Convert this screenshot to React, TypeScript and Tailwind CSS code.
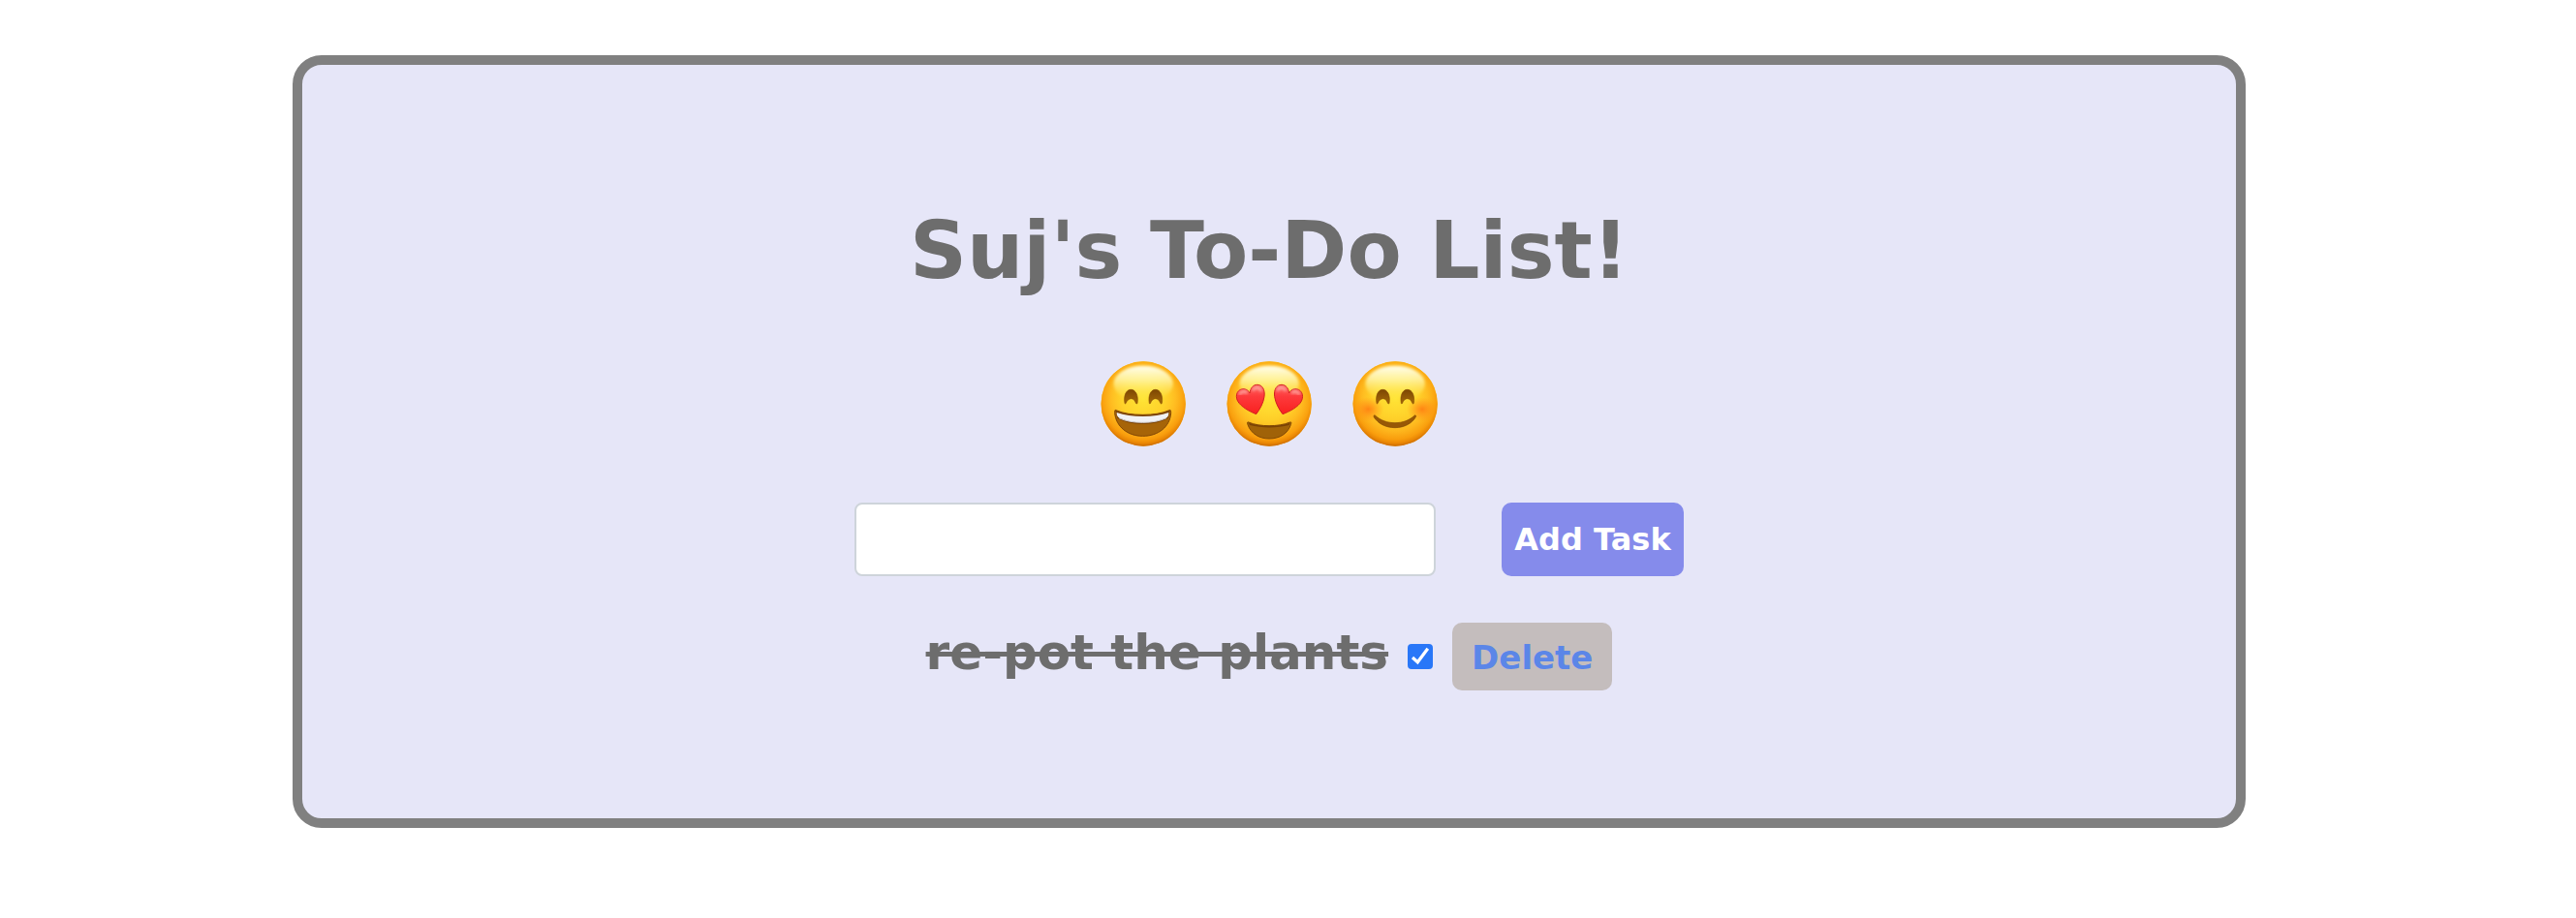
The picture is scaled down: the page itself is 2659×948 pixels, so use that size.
import { useState } from "react";
import type { FormEvent, ReactNode } from "react";

function Face({ id, label, children }: { id: string; label: string; children: ReactNode }) {
  return (
    <svg role="img" aria-label={label} viewBox="48 38 264 264" className="size-22">
      <defs>
        <linearGradient id={`${id}-base`} x1="0" y1="0" x2="0" y2="1">
          <stop offset="0" stopColor="#fcc400" />
          <stop offset="0.3" stopColor="#ffd42a" />
          <stop offset="0.6" stopColor="#ffca26" />
          <stop offset="1" stopColor="#f39a0a" />
        </linearGradient>
        <radialGradient id={`${id}-glow`} cx="0.5" cy="0.44" r="0.56">
          <stop offset="0" stopColor="#ffe637" stopOpacity="0.9" />
          <stop offset="0.45" stopColor="#ffd52c" stopOpacity="0.7" />
          <stop offset="0.68" stopColor="#ffb81f" stopOpacity="0.8" />
          <stop offset="0.86" stopColor="#f99c0c" stopOpacity="0.9" />
          <stop offset="0.94" stopColor="#e98504" stopOpacity="0.95" />
          <stop offset="1" stopColor="#c96a02" />
        </radialGradient>
        <linearGradient id={`${id}-shine`} x1="0" y1="0" x2="0" y2="1">
          <stop offset="0" stopColor="#fffff0" />
          <stop offset="0.4" stopColor="#fff9b0" stopOpacity="0.8" />
          <stop offset="1" stopColor="#ffec40" stopOpacity="0" />
        </linearGradient>
        <linearGradient id={`${id}-brown`} x1="0" y1="0" x2="0" y2="1">
          <stop offset="0" stopColor="#7d4603" />
          <stop offset="1" stopColor="#a66a08" />
        </linearGradient>
        <linearGradient id={`${id}-heart`} x1="0" y1="0" x2="0" y2="1">
          <stop offset="0" stopColor="#ff6460" />
          <stop offset="0.4" stopColor="#fd3a3c" />
          <stop offset="1" stopColor="#f9201f" />
        </linearGradient>
        <radialGradient id={`${id}-blush`}>
          <stop offset="0" stopColor="#ff7a10" stopOpacity="0.85" />
          <stop offset="1" stopColor="#ff8a14" stopOpacity="0" />
        </radialGradient>
        <filter id={`${id}-soft`} x="-20%" y="-20%" width="140%" height="140%">
          <feGaussianBlur stdDeviation="4" />
        </filter>
      </defs>
      <circle cx="180.500" cy="170" r="131" fill={`url(#${id}-base)`} />
      <circle cx="180.500" cy="170" r="131" fill={`url(#${id}-glow)`} />
      <ellipse cx="180.500" cy="108" rx="92" ry="56" fill={`url(#${id}-shine)`} filter={`url(#${id}-soft)`} />
      {children}
    </svg>
  );
}

function ArchEyes({ id }: { id: string }) {
  return (
    <g fill={`url(#${id}-brown)`} stroke="#854c04" strokeWidth="2" strokeLinejoin="round">
      <path d="M123 168C119 145 127 126 142 126C157 126 166 145 162 168C161 171 158 170 157 167C154 158 149 154 143 154C136 154 130 159 127 167C126 170 124 171 123 168Z" />
      <path d="M199 168C195 145 203 126 218 126C233 126 242 145 238 168C237 171 234 170 233 167C230 158 224 154 218 154C211 154 206 159 203 167C202 170 200 171 199 168Z" />
    </g>
  );
}

function GrinningFace() {
  return (
    <Face id="grin" label="Grinning face">
      <ArchEyes id="grin" />
      <path
        d="M96 190C91 187 92 194 92 199C96 241 132 270 179 270C227 270 263 241 266 199C266 193 266 187 261 190C238 200 211 204 179 204C146 204 119 200 96 190Z"
        fill="#a66408"
      />
      <path
        d="M94 190C119 200 146 204 179 204C211 204 238 200 263 190L258 214C236 227 210 232 179 232C147 232 121 227 100 214Z"
        fill="#7a4205"
      />
      <path
        d="M98 197C121 205 148 209 179 209C209 209 237 205 259 197C259 207 257 212 250 215C231 223 207 228 179 228C150 228 127 223 108 215C101 212 98 207 98 197Z"
        fill="#f1f1f3"
      />
      <path d="M105 214C126 224 150 228 179 228C207 228 231 224 252 214" fill="none" stroke="#cfcdd0" strokeWidth="3" />
      <path
        d="M96 190C91 187 92 194 92 199C96 241 132 270 179 270C227 270 263 241 266 199C266 193 266 187 261 190C238 200 211 204 179 204C146 204 119 200 96 190Z"
        fill="none"
        stroke="#824705"
        strokeWidth="3"
      />
    </Face>
  );
}

function HeartEyesFace() {
  return (
    <Face id="love" label="Smiling face with heart eyes">
      <g fill="url(#love-heart)" stroke="#d0201f" strokeWidth="3" strokeLinejoin="round">
        <path d="M140 202C118 193 94 180 83 162C72 141 85 123 102 124C111 125 117 130 120 137C122 121 131 111 143 111C159 111 168 126 165 148C162 168 152 186 140 202Z" />
        <path d="M222 202C210 186 200 168 197 148C194 126 203 111 219 111C231 111 240 121 242 137C245 130 251 125 260 124C278 123 290 141 280 162C270 180 245 193 222 202Z" />
      </g>
      <g fill="none" stroke="#ffc4bd" strokeLinecap="round" strokeWidth="9" opacity="0.75" filter="url(#love-soft)">
        <path d="M90 139C94 131 102 130 109 135" />
        <path d="M131 126C139 116 150 118 154 128" />
        <path d="M207 127C211 117 222 117 230 127" />
        <path d="M253 135C260 130 268 131 272 139" />
      </g>
      <path
        d="M116 227C112 225 112 230 114 235C124 262 149 278 180 278C213 278 238 262 247 235C249 230 249 225 245 227C225 235 204 238 180 238C157 238 135 235 116 227Z"
        fill="#a06208"
        stroke="#834a05"
        strokeWidth="3"
      />
      <path d="M117 229C159 242 204 242 245 229L242 236C204 246 158 246 120 236Z" fill="#7a4205" />
    </Face>
  );
}

function BlushingFace() {
  return (
    <Face id="blush" label="Smiling face with smiling eyes">
      <ellipse cx="97" cy="187" rx="48" ry="38" fill="url(#blush-blush)" />
      <ellipse cx="264" cy="187" rx="48" ry="38" fill="url(#blush-blush)" />
      <ArchEyes id="blush" />
      <path
        d="M118 206C136 222 156 229 180 229C204 229 224 221 241 206C244 204 246 208 244 211C232 231 208 244 180 244C151 244 127 231 115 212C113 208 115 203 118 206Z"
        fill="#985806"
        stroke="#804905"
        strokeWidth="2"
      />
    </Face>
  );
}

type Task = { id: number; name: string; done: boolean };

export default function App() {
  const [draft, setDraft] = useState("");
  const [tasks, setTasks] = useState<Task[]>([{ id: 1, name: "re-pot the plants", done: true }]);

  const addTask = (event: FormEvent) => {
    event.preventDefault();
    if (!draft.trim()) return;
    setTasks([...tasks, { id: Date.now(), name: draft.trim(), done: false }]);
    setDraft("");
  };

  const toggle = (id: number) =>
    setTasks(tasks.map((task) => (task.id === id ? { ...task, done: !task.done } : task)));

  return (
    <div className="bg-white pt-[57px] pr-[341px] pb-[93px] pl-[302px] font-['DejaVu_Sans',Verdana,sans-serif] font-bold text-[#6d6d6d]">
      <main className="flex flex-col items-center rounded-[30px] border-10 border-[#808080] bg-[#e6e6f8] pt-36 pb-33">
        <h1 className="text-[82px] leading-24">Suj's To-Do List!</h1>

        <div className="mt-[66px] flex gap-[42px]">
          <GrinningFace />
          <HeartEyesFace />
          <BlushingFace />
        </div>

        <form onSubmit={addTask} className="mt-[58px] flex gap-[68px]">
          <input
            type="text"
            aria-label="New task"
            value={draft}
            onChange={(event) => setDraft(event.target.value)}
            className="h-[76px] w-[600px] rounded-lg border-2 border-[#ced4da] bg-white px-6 text-[32px] font-normal outline-none"
          />
          <button type="submit" className="h-[76px] w-[188px] rounded-[10px] bg-[#858beb] text-[32px] text-white">
            Add Task
          </button>
        </form>

        <ul className="mt-12 flex flex-col gap-6">
          {tasks.map((task) => (
            <li key={task.id} className="flex items-baseline gap-5">
              <label
                htmlFor={`task-${task.id}`}
                className={task.done ? "text-[50px] leading-[60px] line-through" : "text-[50px] leading-[60px]"}
              >
                {task.name}
              </label>
              <span className="grid">
                <input
                  id={`task-${task.id}`}
                  type="checkbox"
                  checked={task.done}
                  onChange={() => toggle(task.id)}
                  className="col-start-1 row-start-1 size-[26px] appearance-none rounded-sm border-2 border-[#808080] bg-white checked:border-[#2977f8] checked:bg-[#2977f8]"
                />
                {task.done && (
                  <svg
                    aria-hidden="true"
                    viewBox="0 0 26 26"
                    className="pointer-events-none col-start-1 row-start-1 size-[26px]"
                  >
                    <path d="M5 14L10.300 18.800L20.800 4.800" fill="none" stroke="white" strokeWidth="3.200" />
                  </svg>
                )}
              </span>
              <button
                type="button"
                onClick={() => setTasks(tasks.filter((other) => other.id !== task.id))}
                className="rounded-[10px] bg-[#c4bdbd] px-5 pt-[15px] pb-[13px] text-[34px] leading-[42px] text-[#5b86e8]"
              >
                Delete
              </button>
            </li>
          ))}
        </ul>
      </main>
    </div>
  );
}
